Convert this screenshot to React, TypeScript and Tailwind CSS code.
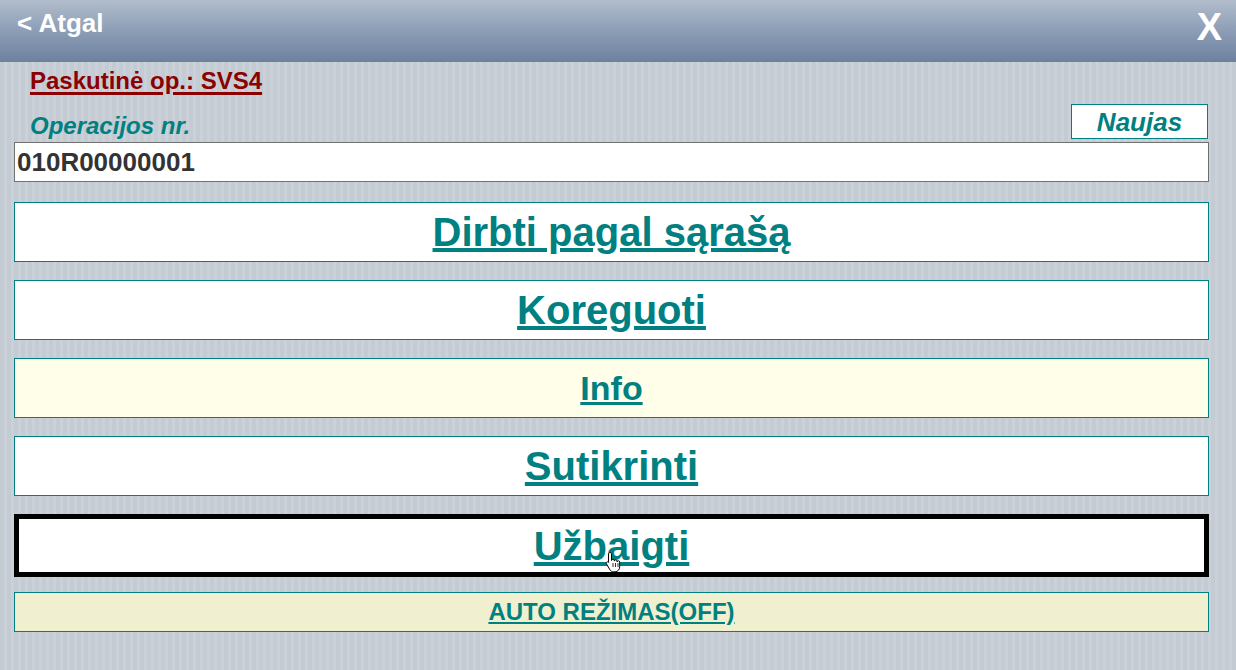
import React from "react";

const font = { fontFamily: '"Liberation Sans", Arial, sans-serif' };

function HandCursor() {
  return (
    <svg
      className="absolute left-[586px] top-[32px]"
      width="16"
      height="22"
      viewBox="0 0 16 22"
    >
      <path
        d="M5 1.5c.8 0 1.5.7 1.5 1.5v6.5c0-.8.7-1.3 1.4-1.3s1.4.6 1.4 1.3v.6c0-.8.7-1.3 1.4-1.3s1.4.6 1.4 1.3v.8c0-.7.6-1.2 1.3-1.2s1.3.6 1.3 1.3v4.8c0 2.6-1.9 5-4.6 5H8.4c-1.5 0-2.6-.7-3.4-1.9L1.5 13c-.5-.7-.3-1.600.4-2s1.5-.2 2 .4l-.4-.5V3c0-.8.7-1.5 1.5-1.5z"
        fill="#fff"
        stroke="#000"
        strokeWidth="1"
      />
      <path d="M8 12v4M10.5 12v4M13 12v4" stroke="#000" strokeWidth="0.8" />
    </svg>
  );
}

function MenuButton({
  label,
  bg = "bg-white",
  size = "text-[40px]",
  thick = false,
  height = "h-[60px]",
  cursor = false,
}: {
  label: string;
  bg?: string;
  size?: string;
  thick?: boolean;
  height?: string;
  cursor?: boolean;
}) {
  return (
    <div
      className={`relative flex items-center justify-center ${height} ${bg} ${
        thick ? "border-[5px] border-black" : "border border-[#008080]"
      }`}
    >
      <span
        className={`${size} font-bold text-[#008080] underline leading-none`}
        style={font}
      >
        {label}
      </span>
      {cursor && <HandCursor />}
    </div>
  );
}

export default function App() {
  return (
    <div
      className="w-[1236px] h-[670px] overflow-hidden bg-[repeating-linear-gradient(90deg,#c4cbd3_0px,#c4cbd3_4px,#cbd1d8_4px,#cbd1d8_7px)]"
      style={font}
    >
      <header className="h-[62px] flex items-start justify-between px-[17px] bg-[linear-gradient(to_bottom,#b1bdcc,#8c9db5_50%,#6d819f)]">
        <span className="text-white font-bold text-[26px] leading-none mt-[10px]">
          &lt; Atgal
        </span>
        <span className="text-white font-bold text-[38px] leading-none mt-[8px] mr-[-3px]">
          X
        </span>
      </header>

      <div className="pl-[14px] w-[1209px]">
        <div className="mt-[5px] pl-[16px] h-[28px] flex items-center">
          <span className="text-[#8b0000] font-bold text-[24px] leading-[28px] underline decoration-[3px] underline-offset-[3px]">
            Paskutinė op.: SVS4
          </span>
        </div>

        <div className="mt-[9px] flex items-end justify-between">
          <span className="pl-[16px] text-[#008080] font-bold italic text-[24px] leading-[28px] mb-[-1px]">
            Operacijos nr.
          </span>
          <div className="w-[137px] h-[35px] mr-[1px] bg-white border border-[#008080] flex items-center justify-center">
            <span className="text-[#008080] font-bold italic text-[26px] leading-none">
              Naujas
            </span>
          </div>
        </div>

        <div className="mt-[3px] h-[40px] bg-white border border-[#707070] flex items-center pl-[2px]">
          <span className="text-[#333333] font-bold text-[26px] leading-none">
            010R00000001
          </span>
        </div>

        <div className="mt-[20px] flex flex-col gap-[18px]">
          <MenuButton label="Dirbti pagal sąrašą" />
          <MenuButton label="Koreguoti" />
          <MenuButton label="Info" bg="bg-[#ffffe9]" size="text-[34px]" />
          <MenuButton label="Sutikrinti" />
        </div>

        <div className="mt-[18px]">
          <MenuButton label="Užbaigti" thick height="h-[63px]" cursor />
        </div>

        <div className="mt-[15px]">
          <MenuButton
            label="AUTO REŽIMAS(OFF)"
            bg="bg-[#f0f0d0]"
            size="text-[24px]"
            height="h-[40px]"
          />
        </div>
      </div>
    </div>
  );
}
